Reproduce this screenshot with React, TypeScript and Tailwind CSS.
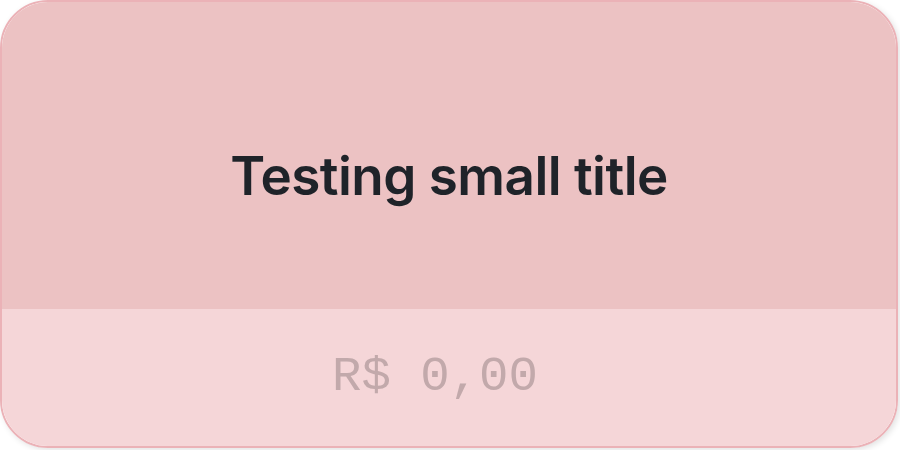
export default function App() {
  return (
    <div className="w-[900px] h-[450px] bg-white">
      <div className="w-[898px] h-[448px] rounded-[48px] border-2 border-[#ebb2b7] overflow-hidden flex flex-col shadow-[2px_2px_6px_rgba(0,0,0,0.12)]">
        <div className="h-[307px] bg-[#ecc2c3] flex items-center justify-center pt-[42px]">
          <h1 className="font-['Inter',sans-serif] font-semibold text-[53px] text-[#1f2329] tracking-[-0.01em]">
            Testing small title
          </h1>
        </div>
        <div className="flex-1 bg-[#f5d6d8] flex items-center justify-center">
          <span className="font-['Liberation_Mono',monospace] text-[49px] text-[#c2a9ab] pr-[28px]">
            R$ 0,00
          </span>
        </div>
      </div>
    </div>
  )
}
